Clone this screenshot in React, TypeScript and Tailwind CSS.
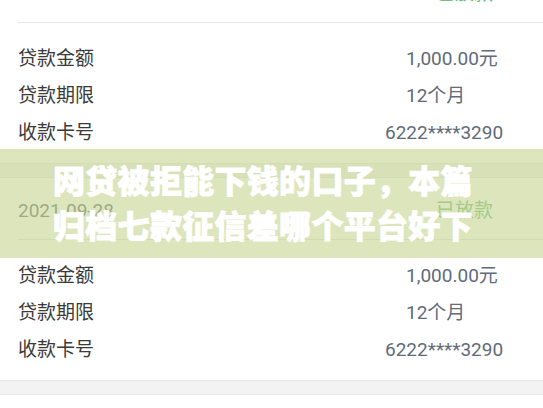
const records = [
  { date: "2021-09-28", status: "已放款" },
  { date: "2021-09-28", status: "已放款" },
];

const rows = [
  { label: "贷款金额", value: "1,000.00元", offset: "pl-[21px]" },
  { label: "贷款期限", value: "12个月", offset: "pl-[21px]" },
  { label: "收款卡号", value: "6222****3290", offset: "pl-0" },
];

function RecordCard({ date, status, first }: { date: string; status: string; first?: boolean }) {
  return (
    <div className={first ? "-mt-[39px]" : ""}>
      <div className="h-[61px] pt-[5px] pl-[18px] pr-[50px] flex items-center justify-between text-[19px]">
        <span className="text-[#66727f]">{date}</span>
        <span className="text-[#72bf84]">{status}</span>
      </div>
      <div className="ml-[18px] h-px bg-[#e6e6e6]" />
      <div className="pt-[18px] pb-[11px]">
        {rows.map((r) => (
          <div key={r.label} className="h-[37px] flex items-center text-[19px]">
            <span className="w-[385px] flex-none pl-[18px] text-[#3a3a3a]">{r.label}</span>
            <span className={`${r.offset} text-[#5f6b78]`}>{r.value}</span>
          </div>
        ))}
      </div>
      <div className="h-[15px] bg-[#f3f3f3] border-y border-[#e9e9e9]" />
    </div>
  );
}

export default function App() {
  return (
    <div
      className="relative w-[543px] h-[408px] overflow-hidden bg-white"
      style={{ fontFamily: "Roboto, 'Noto Sans CJK SC', sans-serif" }}
    >
      {records.map((rec, i) => (
        <RecordCard key={i} date={rec.date} status={rec.status} first={i === 0} />
      ))}

      <div className="absolute left-0 right-0 top-[149px] h-[109px] bg-[rgba(196,210,140,0.58)] pt-[8px] pl-[53px]">
        <p
          className="text-white text-[32px] leading-[45px] font-black tracking-[0.3px] [-webkit-text-stroke:0.8px_white]"
          style={{ fontFamily: "'Noto Sans CJK SC', sans-serif" }}
        >
          网贷被拒能下钱的口子，本篇
          <br />
          归档七款征信差哪个平台好下
        </p>
      </div>
    </div>
  );
}
